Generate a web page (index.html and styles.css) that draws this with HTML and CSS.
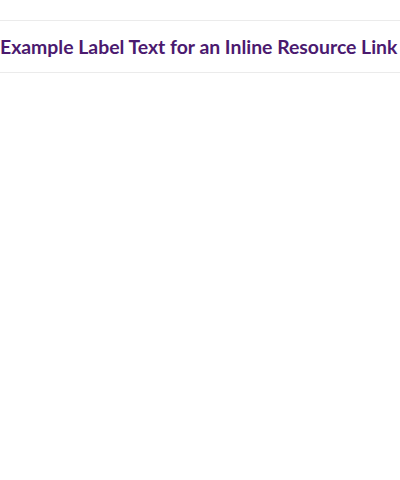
FILE: index.html
```html
<!DOCTYPE html>
<html>
<head>
<meta charset="utf-8">
<link rel="stylesheet" href="styles.css">
</head>
<body>
<div class="resource">
  <a class="resource-link" href="#">Example Label Text for an Inline Resource Link</a>
</div>
</body>
</html>
```

FILE: styles.css
```css
html, body {
  margin: 0;
  padding: 0;
  background: #fff;
}
.resource {
  margin-top: 20px;
  border-top: 1px solid #ebebeb;
  border-bottom: 1px solid #ebebeb;
  height: 51px;
  display: flex;
  align-items: center;
}
.resource-link {
  font-family: Lato, sans-serif;
  font-weight: 700;
  font-size: 19.4px;
  color: #4b1a6f;
  text-decoration: none;
  white-space: nowrap;
}
```
